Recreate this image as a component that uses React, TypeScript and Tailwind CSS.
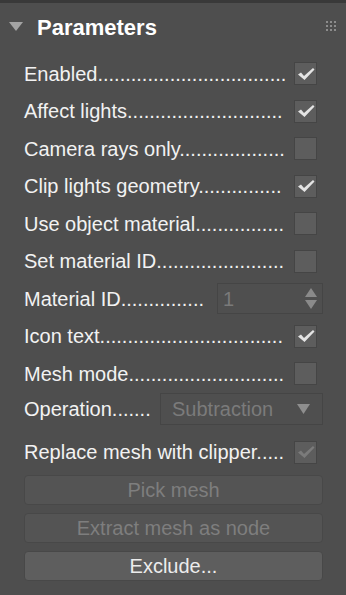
import React from 'react';

function Check({ dim }: { dim?: boolean }) {
  return (
    <svg width="18" height="14" viewBox="0 0 18 14" className="block">
      <path
        d="M1 7.5 L4 5.5 L7 9 L16 1 L17.5 2.5 L7.5 13 Z"
        fill={dim ? '#7b7b7b' : '#e4e4e4'}
      />
    </svg>
  );
}

function CheckBox({ checked, dim }: { checked?: boolean; dim?: boolean }) {
  return (
    <div className="ml-auto mr-[6px] flex h-[23px] w-[23px] shrink-0 items-center justify-center border border-[#454545] bg-[#5d5d5d]">
      {checked && <Check dim={dim} />}
    </div>
  );
}

// label + dot leader, dots counted to fill up to the control
function Label({ text, dots }: { text: string; dots: number }) {
  return <span className="shrink-0 whitespace-nowrap">{text + '.'.repeat(dots)}</span>;
}

function CheckRow({ text, dots, checked, dim }: { text: string; dots: number; checked?: boolean; dim?: boolean }) {
  return (
    <div className="flex h-[37.5px] items-center">
      <Label text={text} dots={dots} />
      <CheckBox checked={checked} dim={dim} />
    </div>
  );
}

export default function App() {
  return (
    <div
      className="h-[595px] w-[346px] overflow-hidden border-t-[3px] border-[#393939] bg-[#4e4e4e] text-[20px] text-[#f2f2f2]"
      style={{ fontFamily: '"Liberation Sans", Arial, sans-serif' }}
    >
      {/* Header */}
      <div className="flex h-[52px] items-center pl-[9px] pr-[10px]">
        <svg width="14" height="9" viewBox="0 0 14 9" className="mb-[6px]">
          <path d="M0 0 H14 L7 9 Z" fill="#a3a3a3" />
        </svg>
        <span className="ml-[14px] mb-[4px] text-[22px] font-bold text-white">Parameters</span>
        <div className="ml-auto mb-[6px] grid grid-cols-3 gap-[2px]">
          {Array.from({ length: 9 }).map((_, i) => (
            <div key={i} className="h-[2px] w-[2px] bg-[#8c8c8c]" />
          ))}
        </div>
      </div>

      <div className="pl-[24px] pr-[23px]">
        <CheckRow text="Enabled" dots={34} checked />
        <CheckRow text="Affect lights" dots={28} checked />
        <CheckRow text="Camera rays only" dots={19} />
        <CheckRow text="Clip lights geometry" dots={15} checked />
        <CheckRow text="Use object material" dots={16} />
        <CheckRow text="Set material ID" dots={23} />

        <div className="flex h-[37.5px] items-center">
          <Label text="Material ID" dots={15} />
          <div className="ml-auto flex h-[31px] w-[106px] shrink-0 items-center justify-between border border-[#454545] bg-[#4f4f4f] pl-[5px] pr-[5px]">
            <span className="text-[#7a7a7a]">1</span>
            <div className="flex flex-col gap-[3px]">
              <svg width="12" height="9" viewBox="0 0 12 9">
                <path d="M6 0 L12 9 H0 Z" fill="#8a8a8a" />
              </svg>
              <svg width="12" height="9" viewBox="0 0 12 9">
                <path d="M0 0 H12 L6 9 Z" fill="#8a8a8a" />
              </svg>
            </div>
          </div>
        </div>

        <CheckRow text="Icon text" dots={33} checked />
        <CheckRow text="Mesh mode" dots={28} />

        <div className="flex h-[33px] items-center">
          <Label text="Operation" dots={7} />
          <div className="ml-auto flex h-[32px] w-[163px] shrink-0 items-center justify-between border border-[#454545] bg-[#4f4f4f] pl-[11px] pr-[12px]">
            <span className="text-[#7b7b7b]">Subtraction</span>
            <svg width="13" height="10" viewBox="0 0 13 10">
              <path d="M0 0 H13 L6.5 10 Z" fill="#8e8e8e" />
            </svg>
          </div>
        </div>

        <div className="mt-[4px] flex h-[45px] items-center">
          <Label text="Replace mesh with clipper" dots={5} />
          <CheckBox checked dim />
        </div>

        <div className="flex flex-col gap-[8px]">
          <button className="h-[30px] w-full rounded-[4px] border border-[#484848] bg-[#545454] leading-none text-[#7e7e7e]">
            Pick mesh
          </button>
          <button className="h-[30px] w-full rounded-[4px] border border-[#484848] bg-[#545454] leading-none text-[#7e7e7e]">
            Extract mesh as node
          </button>
          <button className="h-[30px] w-full rounded-[4px] border border-[#484848] bg-[#5e5e5e] leading-none text-[#ececec]">
            Exclude...
          </button>
        </div>
      </div>
    </div>
  );
}
